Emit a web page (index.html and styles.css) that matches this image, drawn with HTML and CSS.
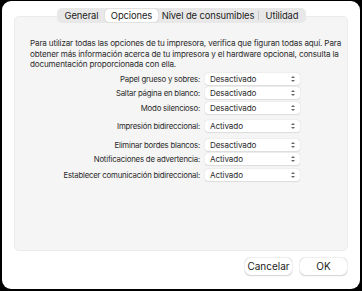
FILE: index.html
```html
<!DOCTYPE html>
<html>
<head>
<meta charset="utf-8">
<link rel="stylesheet" href="styles.css">
</head>
<body>
<div class="window">
  <div class="panel">
    <div class="tabs">
      <div class="tab t1">General</div>
      <div class="tab t2 selected">Opciones</div>
      <div class="tab t3">Nivel de consumibles</div>
      <div class="sep"></div>
      <div class="tab t4">Utilidad</div>
    </div>
    <p class="intro">Para utilizar todas las opciones de tu impresora, verifica que figuran todas aquí. Para<br>obtener más información acerca de tu impresora y el hardware opcional, consulta la<br>documentación proporcionada con ella.</p>
    <div class="form">
      <div class="row r1"><span class="label">Papel grueso y sobres:</span><div class="popup">Desactivado<span class="chev"></span></div></div>
      <div class="row r2"><span class="label">Saltar página en blanco:</span><div class="popup">Desactivado<span class="chev"></span></div></div>
      <div class="row r3"><span class="label">Modo silencioso:</span><div class="popup">Desactivado<span class="chev"></span></div></div>
      <div class="row r4"><span class="label">Impresión bidireccional:</span><div class="popup">Activado<span class="chev"></span></div></div>
      <div class="row r5"><span class="label">Eliminar bordes blancos:</span><div class="popup">Desactivado<span class="chev"></span></div></div>
      <div class="row r6"><span class="label">Notificaciones de advertencia:</span><div class="popup">Activado<span class="chev"></span></div></div>
      <div class="row r7"><span class="label">Establecer comunicación bidireccional:</span><div class="popup">Activado<span class="chev"></span></div></div>
    </div>
  </div>
  <div class="buttons">
    <div class="btn">Cancelar</div>
    <div class="btn">OK</div>
  </div>
</div>
</body>
</html>
```
FILE: styles.css
```css
html, body { margin: 0; padding: 0; }
body {
  background: #000;
  width: 362px;
  height: 291px;
  overflow: hidden;
  font-family: Inter, "Noto Sans", "Liberation Sans", sans-serif;
  color: #2a2a2a;
}
.window {
  margin: 1px 2px 0 2px;
  height: 288px;
  background: #fff;
  border-radius: 9px;
  box-sizing: border-box;
  padding: 15px 12px 0 12px;
  display: flex;
  flex-direction: column;
}
.panel {
  position: relative;
  background: #f5f5f5;
  border: 1px solid #ebebeb;
  border-radius: 5px;
  height: 235px;
  box-sizing: border-box;
  padding: 21px 4px 0 15px;
}
.tabs {
  position: absolute;
  top: -9px;
  left: 42px;
  width: 249px;
  box-sizing: border-box;
  height: 15px;
  display: flex;
  align-items: center;
  background: #e8e8e8;
  border-radius: 5px;
  padding: 0 1px;
  font-size: 9.4px;
  letter-spacing: -0.1px;
  color: #222;
  white-space: nowrap;
}
.tab {
  height: 13px;
  line-height: 13px;
  text-align: center;
}
.t1 { width: 47px; }
.t2 { width: 53px; }
.t3 { width: 100px; }
.t4 { width: 46px; }
.tab.selected {
  background: #fff;
  border-radius: 4px;
  box-shadow: 0 0 1px rgba(0,0,0,0.3);
}
.sep { width: 1px; height: 9px; background: #c8c8c8; }
.intro {
  margin: 0;
  font-size: 8.1px;
  letter-spacing: -0.15px;
  line-height: 10.6px;
  color: #2a2a2a;
  white-space: nowrap;
}
.form {
  margin-top: 3px;
  display: flex;
  flex-direction: column;
}
.row {
  display: flex;
  align-items: center;
  height: 12px;
}
.r2 { margin-top: 2px; }
.r3 { margin-top: 3px; }
.r4 { margin-top: 6px; }
.r5 { margin-top: 7px; }
.r6 { margin-top: 2px; }
.r7 { margin-top: 4px; }
.label {
  width: 175px;
  text-align: right;
  font-size: 7.8px;
  letter-spacing: -0.2px;
  color: #2a2a2a;
  padding-right: 5px;
  box-sizing: border-box;
  white-space: nowrap;
}
.popup {
  position: relative;
  width: 95px;
  height: 12px;
  background: #fff;
  border-radius: 3px;
  box-shadow: 0 0 1px rgba(0,0,0,0.22), 0 0.5px 1px rgba(0,0,0,0.08);
  font-size: 8.1px;
  letter-spacing: -0.1px;
  line-height: 12px;
  padding-left: 5px;
  box-sizing: border-box;
  color: #2a2a2a;
}
.chev {
  position: absolute;
  right: 5px;
  top: 3px;
  width: 4px;
  height: 6px;
}
.chev::before, .chev::after {
  content: "";
  position: absolute;
  left: 0;
  width: 0; height: 0;
  border-left: 2px solid transparent;
  border-right: 2px solid transparent;
}
.chev::before { top: 0; border-bottom: 2.5px solid #666; }
.chev::after { bottom: 0; border-top: 2.5px solid #666; }
.buttons {
  display: flex;
  justify-content: flex-end;
  gap: 8px;
  margin-top: 7px;
  padding-right: 1px;
}
.btn {
  width: 47px;
  height: 17px;
  line-height: 17px;
  text-align: center;
  background: #fff;
  border-radius: 5px;
  box-shadow: 0 0 1px rgba(0,0,0,0.35), 0 0.5px 1.5px rgba(0,0,0,0.15);
  font-size: 10px;
  color: #222;
}
```
